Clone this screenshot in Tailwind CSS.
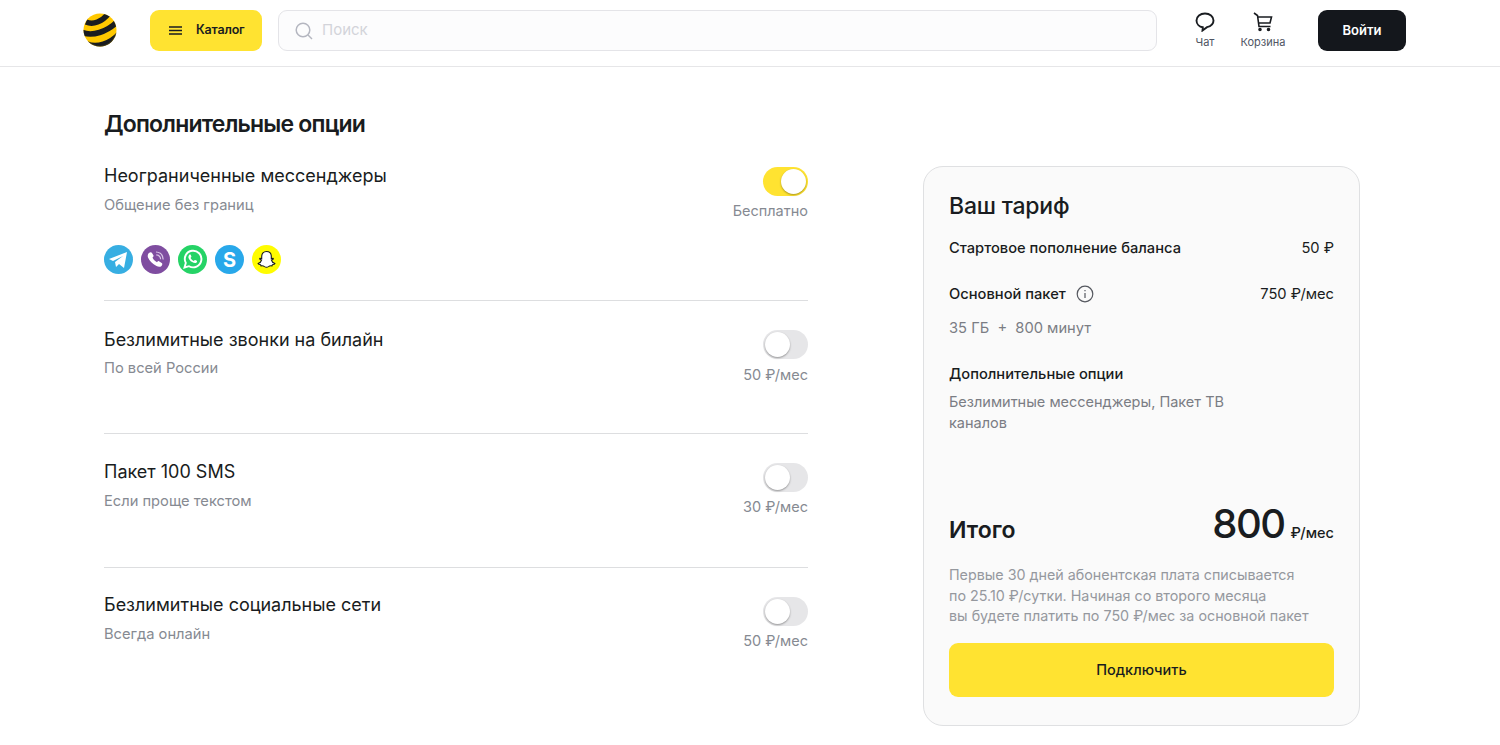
<!DOCTYPE html>
<html lang="ru"><head><meta charset="utf-8">
<script src="https://cdn.jsdelivr.net/npm/@tailwindcss/browser@4"></script>
<title>Тариф</title></head>
<body class="bg-white font-['Inter','Roboto',sans-serif] text-[#191c20] w-[1500px] h-[745px] overflow-hidden">
<header class="h-[67px] border-b border-[#e6e6e8] flex items-start pt-[10px] pl-[83px]">
  <svg class="w-[34px] h-[34px] mt-[3px]" viewBox="0 0 34 34"><defs><clipPath id="b"><circle cx="17" cy="17" r="16.500"/></clipPath></defs><circle cx="17" cy="17" r="16.500" fill="#ffc800"/><g clip-path="url(#b)" fill="none" stroke="#191c20" stroke-width="5.500"><path d="M3 9 C10 12 19 9 26 0"/><path d="M-2 19 C9 24 24 19 35 8"/><path d="M4 31 C14 35 27 31 37 20"/></g><path d="M6 29 A16.500 16.500 0 0 0 33 20" fill="none" stroke="#6a5c20" stroke-opacity=".35" stroke-width="1"/></svg>
  <button class="ml-[33px] w-[112px] h-[41px] rounded-[9px] bg-[#ffe331] flex items-center pl-[19px] text-[12.500px] font-semibold tracking-[-0.2px]">
    <svg class="w-[13px] h-[9px] mr-[14px]" viewBox="0 0 13 9" fill="none" stroke="#191c20" stroke-width="1.600"><path d="M0 1h13M0 4.500h13M0 8h13"/></svg>Каталог</button>
  <div class="ml-[16px] w-[879px] h-[41px] rounded-[9px] border border-[#e4e4e8] bg-[#fcfcfd] flex items-center pl-[16px] text-[15px] text-[#d3d4da]">
    <svg class="w-[18px] h-[18px] mr-[9px]" viewBox="0 0 18 18" fill="none" stroke="#b4b6c0" stroke-width="1.500"><circle cx="8" cy="8" r="6.800"/><path d="M13 13l4 4"/></svg>Поиск</div>
  <div class="w-[60px] ml-[18px] flex flex-col items-center text-[11px] text-[#4f5563]">
    <svg class="w-[20px] h-[20px] mt-[2px]" viewBox="0 0 20 20" fill="none" stroke="#191c20" stroke-width="1.900"><path d="M10 1.500C5.200 1.500 1.500 4.500 1.500 8.500c0 3.700 3 6.300 6.300 6.800L7.500 18.500l4.500-3.300c3.600-.9 6.500-3 6.500-6.700C18.500 4.500 14.800 1.500 10 1.500z"/></svg>
    <span class="mt-[2px] leading-[16px]">Чат</span></div>
  <div class="w-[56px] flex flex-col items-center text-[11px] text-[#4f5563]">
    <svg class="w-[20px] h-[20px] mt-[2px]" viewBox="0 0 20 20" fill="none" stroke="#191c20" stroke-width="1.600"><path d="M1 1l3.500 2.500L6 14.500h11.500M4.800 5H18.500L17 11H5.700"/><circle cx="7" cy="17.500" r="1" fill="#191c20"/><circle cx="15.500" cy="17.500" r="1" fill="#191c20"/></svg>
    <span class="mt-[2px] leading-[16px]">Корзина</span></div>
  <button class="ml-[27px] w-[88px] h-[41px] rounded-[9px] bg-[#14171c] text-white text-[13px] font-semibold">Войти</button>
</header>
<main class="flex pl-[104px]">
  <section class="w-[704px]">
    <h1 class="mt-[43px] text-[23px] leading-[28px] font-semibold tracking-[-0.8px]">Дополнительные опции</h1>
    <div class="mt-[26px] h-[137px] border-b border-[#dddee0] flex justify-between">
      <div><div class="text-[18px] leading-[24px]">Неограниченные мессенджеры</div>
        <div class="mt-[7px] text-[14.700px] leading-[20px] text-[#868a92]">Общение без границ</div>
        <div class="flex gap-[8px] mt-[30px]">
          <svg class="w-[29px] h-[29px]" viewBox="0 0 29 29"><circle cx="14.500" cy="14.500" r="14.500" fill="#37aee2"/><path d="M5 14l18-7-3 16-5-4-3 3-1-5 8-6-10 5z" fill="#fff"/></svg>
          <svg class="w-[29px] h-[29px]" viewBox="0 0 29 29"><circle cx="14.500" cy="14.500" r="14.500" fill="#7f4da0"/><path d="M8 8c1-1 2.500-1 3 0l1.500 2.500c.3.800-.3 1.300-1 2 .8 2 2.500 3.800 4.500 4.700.7-.7 1.300-1.300 2-1l2.700 1.700c.9.600.8 1.900-.2 3-1.200 1.200-3 1.200-5 .2C11.500 19 8.500 16 7 12.500 6.400 11 6.800 9 8 8z" fill="#fff"/><path d="M15 7c4 .2 7 3 7.200 7.500M15.300 9.800c2.500.2 4.200 2 4.300 4.500" fill="none" stroke="#d9c6e6" stroke-width="1.200"/></svg>
          <svg class="w-[29px] h-[29px]" viewBox="0 0 29 29"><circle cx="14.500" cy="14.500" r="14.500" fill="#25d366"/><path d="M6.500 22.500l1.300-4.600A8.300 8.300 0 1 1 11 21.200z" fill="none" stroke="#fff" stroke-width="1.900"/><path d="M11.300 9.800c.5-.5 1.200-.5 1.400 0l.7 1.700c.1.400-.5 1-.8 1.400.7 1.400 1.800 2.400 3.200 3 .4-.4 1-1.100 1.400-.9l1.600.8c.5.300.3 1.200-.2 1.700-1 .9-2.600.7-4.500-.4-1.900-1.100-3.300-2.700-3.700-4.600-.1-1 .2-2 .9-2.700z" fill="#fff"/></svg>
          <div class="w-[29px] h-[29px] rounded-full bg-[#28a8ea] text-white font-bold text-[20px] flex items-center justify-center">S</div>
          <svg class="w-[29px] h-[29px]" viewBox="0 0 29 29"><circle cx="14.500" cy="14.500" r="14.500" fill="#fffc00"/><path d="M14.500 6.500c3 0 4.800 2.200 4.800 5v2l1.700-.3c.6.300.4 1-.2 1.200l-1.400.6c.5 1.800 2 3 3.500 3.600-.3.800-1.400 1-2.500 1.200l-.4 1.100c-1.400-.2-2.500-.1-3.500.7-1.200.8-2.800.8-4 0-1-.8-2.100-.9-3.500-.7l-.4-1.100c-1.100-.2-2.200-.4-2.500-1.200 1.500-.6 3-1.800 3.500-3.600l-1.400-.6c-.6-.2-.8-.9-.2-1.200l1.700.3v-2c0-2.800 1.800-5 4.800-5z" fill="#fff" stroke="#191c20" stroke-width="1.100"/></svg>
        </div></div>
      <div class="flex flex-col items-end pt-[3px]">
        <div class="w-[45px] h-[29px] rounded-full bg-[#ffe331] flex justify-end p-[2px]"><span class="w-[25px] h-[25px] rounded-full bg-white shadow-[0_1px_2px_rgba(0,0,0,0.35)]"></span></div>
        <div class="mt-[5px] text-[14.500px] leading-[20px] text-[#868a92]">Бесплатно</div></div>
    </div>
    <div class="pt-[27px] h-[133px] border-b border-[#dddee0] flex justify-between">
      <div><div class="text-[18px] leading-[24px]">Безлимитные звонки на билайн</div>
        <div class="mt-[6px] text-[14.700px] leading-[20px] text-[#868a92]">По всей России</div></div>
      <div class="flex flex-col items-end pt-[2px]">
        <div class="w-[45px] h-[29px] rounded-full bg-[#e6e6e8] flex p-[2px]"><span class="w-[25px] h-[25px] rounded-full bg-white shadow-[0_1px_2px_rgba(0,0,0,0.35)]"></span></div>
        <div class="mt-[6px] text-[14.500px] leading-[20px] text-[#868a92]">50 ₽/мес</div></div>
    </div>
    <div class="pt-[26px] h-[134px] border-b border-[#dddee0] flex justify-between">
      <div><div class="text-[18px] leading-[24px]">Пакет 100 SMS</div>
        <div class="mt-[7px] text-[14.700px] leading-[20px] text-[#868a92]">Если проще текстом</div></div>
      <div class="flex flex-col items-end pt-[3px]">
        <div class="w-[45px] h-[29px] rounded-full bg-[#e6e6e8] flex p-[2px]"><span class="w-[25px] h-[25px] rounded-full bg-white shadow-[0_1px_2px_rgba(0,0,0,0.35)]"></span></div>
        <div class="mt-[5px] text-[14.500px] leading-[20px] text-[#868a92]">30 ₽/мес</div></div>
    </div>
    <div class="pt-[25px] flex justify-between">
      <div><div class="text-[18px] leading-[24px]">Безлимитные социальные сети</div>
        <div class="mt-[7px] text-[14.700px] leading-[20px] text-[#868a92]">Всегда онлайн</div></div>
      <div class="flex flex-col items-end pt-[4px]">
        <div class="w-[45px] h-[29px] rounded-full bg-[#e6e6e8] flex p-[2px]"><span class="w-[25px] h-[25px] rounded-full bg-white shadow-[0_1px_2px_rgba(0,0,0,0.35)]"></span></div>
        <div class="mt-[5px] text-[14.500px] leading-[20px] text-[#868a92]">50 ₽/мес</div></div>
    </div>
  </section>
  <aside class="ml-[115px] mt-[99px] w-[437px] h-[560px] rounded-[20px] border border-[#dfe0e2] bg-[#fafafa] px-[25px] pt-[25px]">
    <h2 class="text-[23px] leading-[28px] font-medium tracking-[-0.2px]">Ваш тариф</h2>
    <div class="mt-[18px] flex justify-between text-[14.700px] leading-[20px]"><span class="font-medium">Стартовое пополнение баланса</span><span>50 ₽</span></div>
    <div class="mt-[26px] flex justify-between text-[14.700px] leading-[20px]"><span class="font-medium flex items-center">Основной пакет
      <svg class="w-[18px] h-[18px] ml-[10px]" viewBox="0 0 18 18" fill="none" stroke="#55585f" stroke-width="1.200"><circle cx="9" cy="9" r="7.800"/><path d="M9 8v5M9 5v1.300"/></svg></span><span>750 ₽/мес</span></div>
    <div class="mt-[14px] text-[14.700px] leading-[20px] text-[#7a7d84]">35 ГБ &nbsp;+&nbsp; 800 минут</div>
    <div class="mt-[26px] text-[14.700px] leading-[20px] font-medium">Дополнительные опции</div>
    <div class="mt-[7px] w-[300px] text-[14.500px] leading-[21px] text-[#7a7d84]">Безлимитные мессенджеры, Пакет ТВ каналов</div>
    <div class="mt-[67px] flex justify-between items-end">
      <span class="text-[23px] leading-[30px] font-semibold">Итого</span>
      <span class="flex items-baseline -mb-[3px]"><span class="text-[40px] leading-[48px] font-medium tracking-[-1.500px]">800</span><span class="ml-[6px] text-[14.500px] font-medium">₽/мес</span></span></div>
    <div class="mt-[20px] text-[14.300px] leading-[20.600px] text-[#95989e] whitespace-nowrap">Первые 30 дней абонентская плата списывается<br>по 25.10 ₽/сутки. Начиная со второго месяца<br>вы будете платить по 750 ₽/мес за основной пакет</div>
    <button class="mt-[16px] w-[385px] h-[54px] rounded-[9px] bg-[#ffe331] text-[14.500px] font-medium">Подключить</button>
  </aside>
</main>
</body></html>
